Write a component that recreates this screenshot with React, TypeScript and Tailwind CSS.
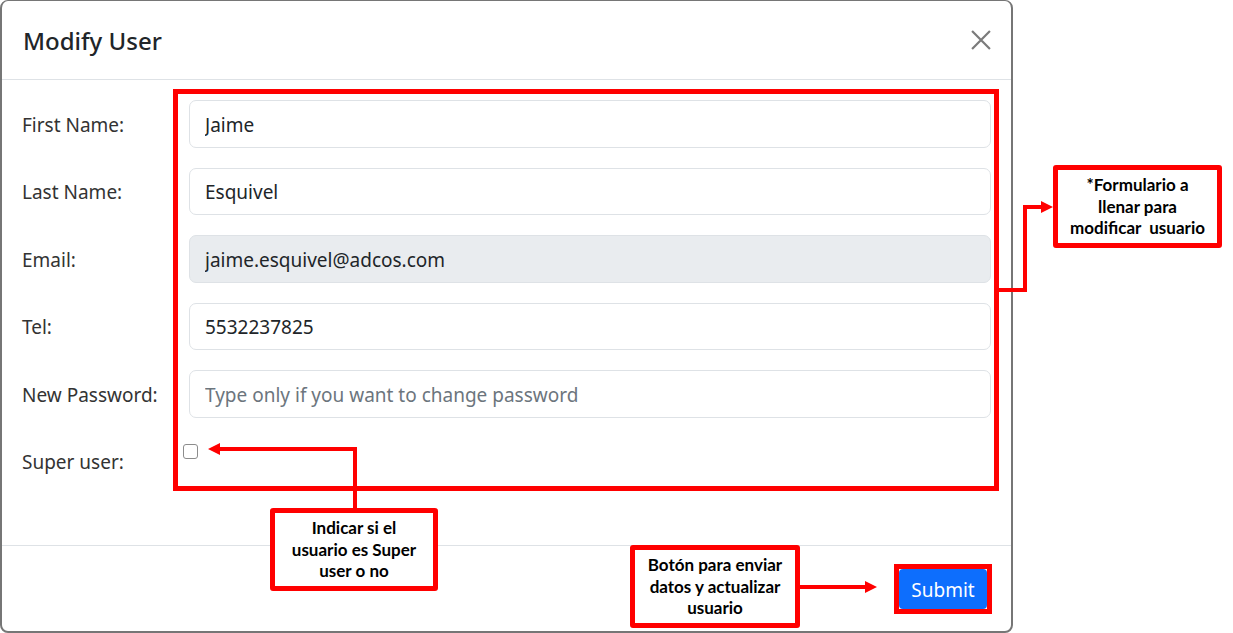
import React from 'react';

const fields = [
  { label: 'First Name:', value: 'Jaime' },
  { label: 'Last Name:', value: 'Esquivel' },
  { label: 'Email:', value: 'jaime.esquivel@adcos.com', disabled: true },
  { label: 'Tel:', value: '5532237825' },
  { label: 'New Password:', value: '', placeholder: 'Type only if you want to change password' },
];

const Callout: React.FC<{ className: string; lines: string[] }> = ({ className, lines }) => (
  <div
    className={`absolute flex flex-col items-center justify-center rounded-[3px] border-[5px] border-[#ff0000] bg-white text-center font-['Lato',sans-serif] text-[17px] font-bold leading-[21.5px] text-black ${className}`}
  >
    {lines.map((l) => (
      <span key={l} className="whitespace-pre">
        {l}
      </span>
    ))}
  </div>
);

const App: React.FC = () => {
  return (
    <div className="relative h-[633px] w-[1233px] overflow-hidden bg-white font-['Noto_Sans',sans-serif] text-[#212529]">
      {/* Modal */}
      <div className="flex h-[633px] w-[1013px] flex-col rounded-[8px] border-x-2 border-t border-b-2 border-[#767676] bg-white">
        <div className="flex h-[79px] shrink-0 items-center justify-between border-b border-[#dee2e6] pl-[21px] pr-[18px]">
          <h5 className="pt-[2px] text-[24px] font-medium leading-none">Modify User</h5>
          <button className="flex h-[24px] w-[24px] items-center justify-center">
            <svg width="22" height="22" viewBox="0 0 16 16" fill="none">
              <path d="M1.5 1.5l13 13M14.5 1.5l-13 13" stroke="#7b7b7b" strokeWidth="1.6" />
            </svg>
          </button>
        </div>

        <div className="flex-1 px-[20px] pt-[20px]">
          {fields.map((f) => (
            <div key={f.label} className="mb-[20px] flex h-[47.5px] items-center">
              <label className="w-[167px] shrink-0 pt-[2px] text-[19px] text-[#333]">{f.label}</label>
              <input
                readOnly
                value={f.value}
                placeholder={f.placeholder}
                disabled={f.disabled}
                className={`h-full flex-1 rounded-[7px] border border-[#dee2e6] px-[15px] pt-[2px] text-[19px] text-[#212529] outline-none placeholder:text-[#6c757d] ${
                  f.disabled ? 'bg-[#e9ecef]' : 'bg-white'
                }`}
              />
            </div>
          ))}
          <div className="flex h-[47.5px] items-start">
            <label className="w-[161px] shrink-0 pt-[9px] text-[19px] leading-[30px] text-[#333]">Super user:</label>
            <span className="mt-[6.5px] block h-[15px] w-[15px] rounded-[3px] border border-[#8c8c8c] bg-white" />
          </div>
        </div>

        <div className="flex h-[86px] shrink-0 items-center justify-end border-t border-[#dee2e6] pr-[24px]">
          <button className="h-[40px] w-[88px] rounded-[4px] bg-[#0d6efd] pt-[3px] text-[19px] text-white">Submit</button>
        </div>
      </div>

      {/* Annotations */}
      <div className="pointer-events-none absolute left-[173px] top-[89px] h-[402px] w-[826px] border-[5px] border-[#ff0000]" />
      <div className="pointer-events-none absolute left-[894px] top-[564px] h-[50px] w-[98px] border-[5px] border-[#ff0000]" />

      <svg className="pointer-events-none absolute left-0 top-0" width="1233" height="633">
        <polyline points="997,290 1025,290 1025,207 1043,207" fill="none" stroke="#ff0000" strokeWidth="4" />
        <polygon points="1041,201 1053,207 1041,213" fill="#ff0000" />
        <polyline points="355,510 355,449 218,449" fill="none" stroke="#ff0000" strokeWidth="4" />
        <polygon points="220,443 208,449 220,455" fill="#ff0000" />
        <line x1="798" y1="587" x2="867" y2="587" stroke="#ff0000" strokeWidth="4" />
        <polygon points="865,581 877,587 865,593" fill="#ff0000" />
      </svg>

      <Callout
        className="left-[1053px] top-[165px] h-[83px] w-[169px]"
        lines={['*Formulario a', 'llenar para', 'modificar  usuario']}
      />
      <Callout
        className="left-[270px] top-[508px] h-[83px] w-[168px]"
        lines={['Indicar si el', 'usuario es Super', 'user o no']}
      />
      <Callout
        className="left-[630px] top-[545px] h-[83px] w-[170px]"
        lines={['Botón para enviar', 'datos y actualizar', 'usuario']}
      />
    </div>
  );
};

export default App;
